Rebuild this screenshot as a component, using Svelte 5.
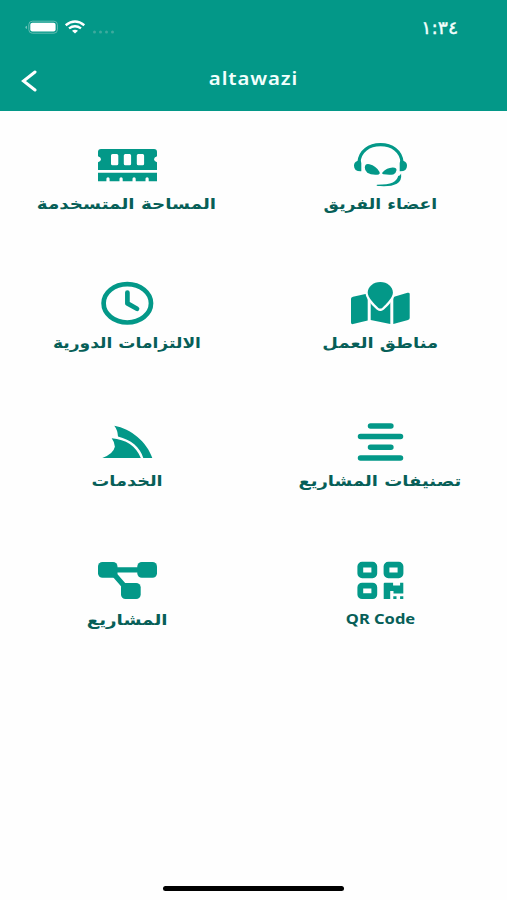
<script lang="ts">
  type Icon = 'memory' | 'team' | 'clock' | 'map' | 'services' | 'list' | 'diagram' | 'qr'

  interface Tile {
    label: string
    icon: Icon
    stretch: number
  }

  const tiles: Tile[] = [
    { label: 'اعضاء الفريق', icon: 'team', stretch: 1.15 },
    { label: 'المساحة المتسخدمة', icon: 'memory', stretch: 1.22 },
    { label: 'مناطق العمل', icon: 'map', stretch: 1.2 },
    { label: 'الالتزامات الدورية', icon: 'clock', stretch: 1.14 },
    { label: 'تصنيفات المشاريع', icon: 'list', stretch: 1.2 },
    { label: 'الخدمات', icon: 'services', stretch: 1.18 },
    { label: 'QR Code', icon: 'qr', stretch: 1.1 },
    { label: 'المشاريع', icon: 'diagram', stretch: 1.22 }
  ]
</script>

<div class="screen">
  <header>
    <div class="status">
      <svg class="indicators" width="96" height="20" viewBox="0 0 96 20">
        <path d="M1.8 5.7v3.2Q.4 8.4.4 7.3t1.4-1.6z" fill="#8fd0c8" />
        <rect x="3.8" y="1.2" width="28.6" height="12" rx="3.5" fill="none" stroke="#63bcb2" />
        <rect x="5.3" y="2.8" width="25.3" height="8.8" rx="2" />
        <g fill="none" stroke="#fff" stroke-width="2.4">
          <path d="M40.7 5.2Q50-2.2 59.3 5.2" />
          <path d="M44 8.4q6-4.4 12 0" />
        </g>
        <path d="M47 10.7q3-2 6 0l-3 2.9z" />
        <g fill="#3eaa9e">
          <circle cx="69.5" cy="12" r="1.5" />
          <circle cx="75.5" cy="12" r="1.5" />
          <circle cx="81.5" cy="12" r="1.5" />
          <circle cx="87.5" cy="12" r="1.5" />
        </g>
      </svg>
      <span class="time">١:٣٤</span>
    </div>
    <div class="bar">
      <button aria-label="back">
        <svg width="16" height="22" viewBox="0 0 16 22">
          <path d="M14 2 2.5 11 14 20" fill="none" stroke="#fff" stroke-width="3" stroke-linecap="round" />
        </svg>
      </button>
      <h1>altawazi</h1>
    </div>
  </header>

  <main dir="rtl">
    {#each tiles as tile}
      <div class="tile">
        <svg class="icon" width="64" height="48" viewBox="0 0 64 48">
          {#if tile.icon === 'memory'}
            <path fill-rule="evenodd" d="M6 8h53q3 0 3 3v4.2q-3 .8-3 3t3 3V29H3v-7.8q3-.8 3-3t-3-3V11q0-3 3-3zM17.5 13q-1.5 0-1.5 1.5v8.3q0 1.5 1.5 1.5h4.3q1.5 0 1.5-1.5v-8.3q0-1.5-1.5-1.5zM30.3 13q-1.5 0-1.5 1.5v8.3q0 1.5 1.5 1.5h4.3q1.5 0 1.5-1.5v-8.3q0-1.5-1.5-1.5zM43.3 13q-1.5 0-1.5 1.5v8.3q0 1.5 1.5 1.5h4.3q1.5 0 1.5-1.5v-8.3q0-1.5-1.5-1.5z" />
            <path d="M3 31.8h59v8.5h-8.3v-2.6q0-1.5-1.6-1.5t-1.6 1.5v2.6h-9.8v-2.6q0-1.5-1.6-1.5t-1.6 1.5v2.6h-9.8v-2.6q0-1.5-1.6-1.5t-1.6 1.5v2.6h-9.9v-2.6q0-1.5-1.6-1.5t-1.6 1.5v2.6H3z" />
          {:else if tile.icon === 'team'}
            <path d="M11 21C12 10 21 3.7 32.5 3.7S53 10 54 21" fill="none" stroke="#039888" stroke-width="3.2" />
            <path d="M9.3 20Q13.3 18.6 13.3 22v8.3q-7.3.3-7.3-5.5 0-3.8 3.3-4.8zM55.7 20q-4-1.4-4 2v8.3q7.3.3 7.3-5.5 0-3.8-3.3-4.8z" />
            <path d="M16.8 26.5q.2-4.2 4.7-3.2 6.5 1.7 9.9 7.4 1.4 2.7-2.2 3-6.4.4-9.9-1.9-2.6-2.1-2.5-5.3zM34.6 31.2q4.2-4.3 10-4.6 4.2-.1 3.9 2.7-.4 3-3.2 4.1-3.8.8-9.8-.1-2.1-.4-.9-2.1z" />
            <path d="M50.2 35q2.2-.3 2.9-2.4.9 7.6-4.3 10.1-5.9 3.1-16.7 2.4-4.6-.3-3.2-1.4 11-.2 15.9-2.3 4.2-2 5.4-6.4z" />
          {:else if tile.icon === 'map'}
            <path d="M5 16.7 19.7 13.5V40.5L5 44.1q-2 .3-2-1.5V18.8q0-1.6 2-2.1zM45.3 16.9l14.2-4.1q2.2-.5 2.2 1.3v23.8q0 1.6-1.7 2.1l-14.7 4.1zM22.7 19l9.6 12 10-12v24.9l-19.6-4z" />
            <path d="M32.3 2c7 0 12.6 4.8 12.6 10.8 0 4.4-6.4 11.4-10.7 15.1q-1.9 1.4-3.8 0c-4.3-3.7-10.7-10.7-10.7-15.1C19.7 6.8 25.3 2 32.3 2z" stroke="#fefefe" stroke-width="4.6" paint-order="stroke" />
          {:else if tile.icon === 'clock'}
            <g fill="none" stroke="#039888" stroke-width="4.7">
              <ellipse cx="32.3" cy="23.3" rx="23.7" ry="19.2" />
              <path d="M32.4 12.5v10.9L42 28.8" stroke-linecap="round" stroke-linejoin="round" />
            </g>
          {:else if tile.icon === 'list'}
            <path d="M22.5 7.9h20.4M12.5 18.4h40M22.5 29.2h20.4M12.5 39.9h40" stroke="#039888" stroke-width="5.5" stroke-linecap="round" />
          {:else if tile.icon === 'services'}
            <path d="M19.3 7.7C36 10.5 52 24 57.3 40h-9C45 29 36 22 23 18.6Q22.7 12 19.3 7.7z" />
            <path d="M16.7 20.3C31 21.5 41 28 45.8 40H7.3Q18.4 35.9 19.9 28.8 19.6 24 16.7 20.3z" />
          {:else if tile.icon === 'qr'}
            <g fill="none" stroke="#039888">
              <rect x="12.3" y="7.7" width="14" height="10.6" rx="1.8" stroke-width="5.8" />
              <rect x="38.5" y="7.7" width="14" height="10.6" rx="1.8" stroke-width="5.8" />
              <rect x="12.3" y="28.6" width="14" height="10.6" rx="1.8" stroke-width="5.8" />
            </g>
            <path d="M36.7 25.8h8.4v2.6h7v-2.6h3.2v10.8H45.5v-2.7h-3.3V42h-6.5V26.8q0-1 1-1zM45.3 39.3h3.2V42h-3.2zM52.1 39.3h3.2V42h-3.2z" />
          {:else}
            <rect x="3" y="5" width="19.5" height="15.8" rx="4.5" />
            <rect x="42.3" y="5" width="19.7" height="15.8" rx="4.5" />
            <rect x="26" y="26" width="19.7" height="16" rx="4.5" />
            <path d="M20 12.9h24M17.5 15.5 31 31" stroke="#039888" stroke-width="5.2" />
          {/if}
        </svg>
        <span class="label" class:latin={tile.icon === 'qr'} style="transform: scaleX({tile.stretch})">{tile.label}</span>
      </div>
    {/each}
  </main>

  <footer><div class="home"></div></footer>
</div>

<style>
  :global(body) {
    margin: 0;
  }

  .screen {
    width: 507px;
    height: 900px;
    display: flex;
    flex-direction: column;
    background: #fefefe;
    overflow: hidden;
  }

  header {
    height: 110.5px;
    flex: none;
    background: #039888;
    color: #f2fffd;
  }

  .status {
    height: 54px;
    box-sizing: border-box;
    padding: 20px 49px 0 25px;
    display: flex;
    justify-content: space-between;
  }

  .indicators {
    fill: #fff;
  }

  .time {
    direction: ltr;
    font: 18px/15px 'DejaVu Sans', sans-serif;
    -webkit-text-stroke: 0.4px #f2fffd;
    transform: scaleX(1.05);
    transform-origin: right;
  }

  .bar {
    display: grid;
    grid-template-columns: 60px 1fr 60px;
    height: 50px;
    align-items: center;
  }

  button {
    border: none;
    background: none;
    padding: 4px 0 0 21px;
    display: flex;
  }

  h1 {
    margin: 0 0 3px;
    text-align: center;
    font: 600 18.5px/24px 'Noto Sans', sans-serif;
    letter-spacing: 0.8px;
    transform: scaleX(1.1);
  }

  main {
    display: grid;
    grid-template-columns: 1fr 1fr;
    grid-auto-rows: 138.6px;
    padding-top: 30.5px;
    flex: 1;
  }

  .tile {
    display: flex;
    flex-direction: column;
    align-items: center;
  }

  .icon {
    fill: #039888;
    flex: none;
  }

  .label {
    margin-top: 4px;
    color: #075f58;
    font: bold 15px/22px 'DejaVu Sans', sans-serif;
    white-space: nowrap;
  }

  .latin {
    margin-top: 2px;
    font-family: 'Noto Sans', sans-serif;
  }

  footer {
    display: flex;
    justify-content: center;
    padding-bottom: 9px;
  }

  .home {
    width: 181px;
    height: 5px;
    border-radius: 3px;
    background: #000;
  }
</style>
